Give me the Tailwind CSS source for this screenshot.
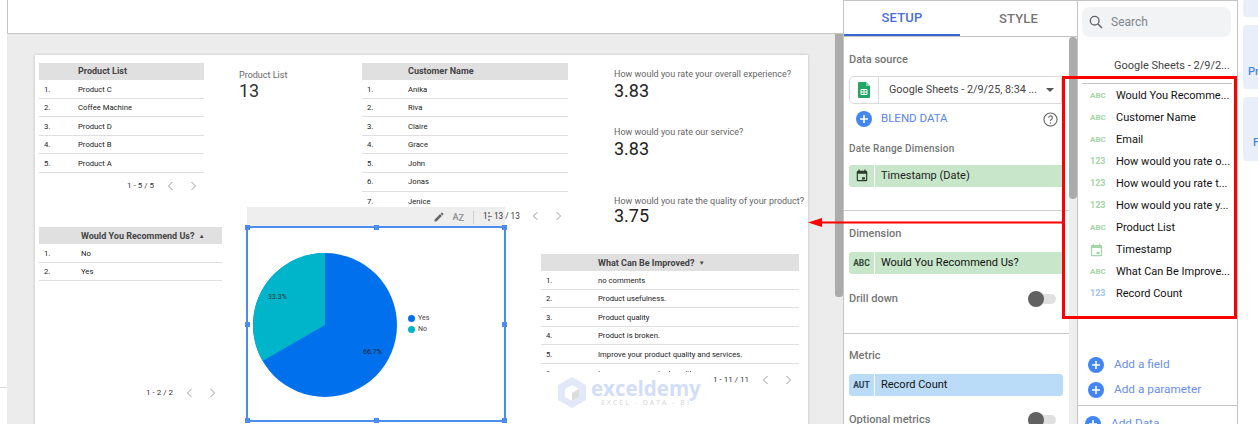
<!DOCTYPE html>
<html lang="en">
<head>
<meta charset="UTF-8">
<title>Report editor</title>
<script src="https://cdn.jsdelivr.net/npm/@tailwindcss/browser@4"></script>
</head>
<body class="bg-white overflow-hidden font-['Roboto',sans-serif]">
<div class="flex h-[424px] w-[1258px] overflow-hidden relative">

  <!-- canvas area -->
  <div class="w-[843px] shrink-0 flex flex-col">
    <div class="h-[34px] shrink-0 border-b border-l border-[#c4c4c4] ml-[7px]"></div>
    <div class="flex flex-1 min-h-0">
      <div class="w-[7px] shrink-0 relative"><div class="absolute left-0 top-[353px] w-[7px] border-t border-[#dcdcdc]"></div></div>
      <div class="flex-1 bg-[#ececec] pt-[21px] pl-[28px] min-w-0 overflow-hidden">
        <!-- report page -->
        <div class="relative w-[773px] h-[400px] bg-white shadow-[0_0_3px_rgba(0,0,0,0.2)]">

          <!-- Product List table -->
          <div class="absolute left-[4px] top-[8px] w-[165px] text-[7.7px] text-[#222]">
            <div class="h-[17px] bg-[#e0e0e0] pl-[39px] font-bold text-[#444] leading-[17px] text-[9px]">Product List</div>
            <div class="flex h-[18.6px] pt-px items-center border-b border-[#e0e0e0]"><span class="w-[39px] pl-[5px]">1.</span>Product C</div>
            <div class="flex h-[18.6px] pt-px items-center border-b border-[#e0e0e0]"><span class="w-[39px] pl-[5px]">2.</span>Coffee Machine</div>
            <div class="flex h-[18.6px] pt-px items-center border-b border-[#e0e0e0]"><span class="w-[39px] pl-[5px]">3.</span>Product D</div>
            <div class="flex h-[18.6px] pt-px items-center border-b border-[#e0e0e0]"><span class="w-[39px] pl-[5px]">4.</span>Product B</div>
            <div class="flex h-[18.6px] pt-px items-center border-b border-[#e0e0e0]"><span class="w-[39px] pl-[5px]">5.</span>Product A</div>
            <div class="flex items-center h-[24px] mt-[1px] pl-[88px] text-[8px] text-[#333]">
              <span>1 - 5 / 5</span>
              <svg class="ml-[13px]" width="7" height="10" viewBox="0 0 7 10" fill="none" stroke="#999" stroke-width="1"><path d="M5.5 1 1.5 5l4 4"/></svg>
              <svg class="ml-[16px]" width="7" height="10" viewBox="0 0 7 10" fill="none" stroke="#999" stroke-width="1"><path d="M1.5 1l4 4-4 4"/></svg>
            </div>
          </div>

          <!-- Scorecards -->
          <div class="absolute left-[204px] top-[14px] text-[#666] text-[9px] leading-[12px]">Product List</div>
          <div class="absolute left-[204px] top-[24px] text-[#333] text-[18px] leading-[24px]">13</div>
          <div class="absolute left-[579px] top-[13px] text-[#666] text-[9px] leading-[12px] whitespace-nowrap">How would you rate your overall experience?</div>
          <div class="absolute left-[579px] top-[24px] text-[#222] text-[18px] leading-[24px]">3.83</div>
          <div class="absolute left-[579px] top-[71px] text-[#666] text-[9px] leading-[12px] whitespace-nowrap">How would you rate our service?</div>
          <div class="absolute left-[579px] top-[82px] text-[#222] text-[18px] leading-[24px]">3.83</div>
          <div class="absolute left-[579px] top-[140px] text-[#666] text-[9px] leading-[12px] whitespace-nowrap">How would you rate the quality of your product?</div>
          <div class="absolute left-[579px] top-[149px] text-[#222] text-[18px] leading-[24px]">3.75</div>

          <!-- Customer Name table -->
          <div class="absolute left-[327px] top-[8px] w-[206px] h-[144px] overflow-hidden text-[7.7px] text-[#222]">
            <div class="h-[17px] bg-[#e0e0e0] pl-[46px] font-bold text-[#444] leading-[17px] text-[9px]">Customer Name</div>
            <div class="flex h-[18.6px] pt-px items-center border-b border-[#e0e0e0]"><span class="w-[46px] pl-[5px]">1.</span>Anika</div>
            <div class="flex h-[18.6px] pt-px items-center border-b border-[#e0e0e0]"><span class="w-[46px] pl-[5px]">2.</span>Riva</div>
            <div class="flex h-[18.6px] pt-px items-center border-b border-[#e0e0e0]"><span class="w-[46px] pl-[5px]">3.</span>Claire</div>
            <div class="flex h-[18.6px] pt-px items-center border-b border-[#e0e0e0]"><span class="w-[46px] pl-[5px]">4.</span>Grace</div>
            <div class="flex h-[18.6px] pt-px items-center border-b border-[#e0e0e0]"><span class="w-[46px] pl-[5px]">5.</span>John</div>
            <div class="flex h-[18.6px] pt-px items-center border-b border-[#e0e0e0]"><span class="w-[46px] pl-[5px]">6.</span>Jonas</div>
            <div class="flex h-[18.6px] pt-px items-center"><span class="w-[46px] pl-[5px]">7.</span>Jenice</div>
          </div>

          <!-- Recommend table -->
          <div class="absolute left-[4px] top-[172px] w-[183px] text-[7.7px] text-[#222]">
            <div class="h-[17px] bg-[#e0e0e0] pl-[42px] font-bold text-[#444] leading-[17px] text-[9px] whitespace-nowrap">Would You Recommend Us? <span class="text-[6px] align-[1px] ml-[2px]">▲</span></div>
            <div class="flex h-[18.6px] pt-px items-center border-b border-[#e0e0e0]"><span class="w-[42px] pl-[5px]">1.</span>No</div>
            <div class="flex h-[18.6px] pt-px items-center border-b border-[#e0e0e0]"><span class="w-[42px] pl-[5px]">2.</span>Yes</div>
          </div>
          <div class="absolute left-[111px] top-[331px] flex items-center h-[14px] text-[8px] text-[#333]">
            <span>1 - 2 / 2</span>
            <svg class="ml-[13px]" width="7" height="10" viewBox="0 0 7 10" fill="none" stroke="#999" stroke-width="1"><path d="M5.5 1 1.5 5l4 4"/></svg>
            <svg class="ml-[16px]" width="7" height="10" viewBox="0 0 7 10" fill="none" stroke="#999" stroke-width="1"><path d="M1.5 1l4 4-4 4"/></svg>
          </div>

          <!-- chart toolbar -->
          <div class="absolute left-[212px] top-[152px] w-[258px] h-[20px] bg-[#eeeeee] flex items-center justify-end text-[#555]">
            <svg class="mr-[7px]" width="12" height="12" viewBox="0 0 24 24" fill="#666"><path d="M3 17.25V21h3.75L17.81 9.94l-3.75-3.75L3 17.25zM20.71 7.04a1 1 0 0 0 0-1.41l-2.34-2.34a1 1 0 0 0-1.41 0l-1.83 1.83 3.75 3.75 1.83-1.83z"/></svg>
            <span class="text-[9px] text-[#999] font-bold mr-[9px] leading-none">A<span class="relative top-[1px]">Z</span></span>
            <div class="w-px h-[13px] bg-[#d0d0d0] mr-[8px]"></div>
            <div class="w-[23px]"></div>
          </div>
          <div class="absolute left-[448px] top-[155px] flex items-center h-[12px] text-[8.2px] text-[#333] whitespace-nowrap">
            <span>1 - 13 / 13</span>
            <svg class="ml-[12px]" width="7" height="10" viewBox="0 0 7 10" fill="none" stroke="#999" stroke-width="1"><path d="M5.5 1 1.5 5l4 4"/></svg>
            <svg class="ml-[16px]" width="7" height="10" viewBox="0 0 7 10" fill="none" stroke="#999" stroke-width="1"><path d="M1.5 1l4 4-4 4"/></svg>
          </div>
          <svg class="absolute left-[453px] top-[157px]" width="2" height="9" viewBox="0 0 2 9" fill="#777"><circle cx="1" cy="1" r="1"/><circle cx="1" cy="4.5" r="1"/><circle cx="1" cy="8" r="1"/></svg>

          <!-- Pie chart selected -->
          <div class="absolute left-[212px] top-[172px] w-[258px] h-[194px] border border-[#4a8cf0] outline outline-[0.5px] outline-[#4a8cf0]">
            <svg class="absolute left-[4px] top-[24px]" width="146" height="146" viewBox="0 0 146 146">
              <circle cx="73" cy="73" r="72" fill="#0070ec"/>
              <path d="M73 73 L73 1 A72 72 0 0 0 10.6 109 Z" fill="#00b5c9"/>
            </svg>
            <span class="absolute left-[20px] top-[65px] text-[7px] text-[#333] leading-[8px]">33.3%</span>
            <span class="absolute left-[115px] top-[120px] text-[7px] text-[#222] leading-[8px]">66.7%</span>
            <div class="absolute left-[160px] top-[85px] flex items-center gap-[3px] text-[7px] text-[#444] leading-[11px]"><span class="w-[7px] h-[7px] rounded-full bg-[#0070ec]"></span>Yes</div>
            <div class="absolute left-[160px] top-[96px] flex items-center gap-[3px] text-[7px] text-[#444] leading-[11px]"><span class="w-[7px] h-[7px] rounded-full bg-[#00b5c9]"></span>No</div>
            <!-- handles -->
            <span class="absolute -left-[3px] -top-[3px] w-[5px] h-[5px] bg-[#4a8cf0]"></span>
            <span class="absolute left-[126px] -top-[3px] w-[5px] h-[5px] bg-[#4a8cf0]"></span>
            <span class="absolute -right-[3px] -top-[3px] w-[5px] h-[5px] bg-[#4a8cf0]"></span>
            <span class="absolute -left-[3px] top-[94px] w-[5px] h-[5px] bg-[#4a8cf0]"></span>
            <span class="absolute -right-[3px] top-[94px] w-[5px] h-[5px] bg-[#4a8cf0]"></span>
            <span class="absolute -left-[3px] -bottom-[3px] w-[5px] h-[5px] bg-[#4a8cf0]"></span>
            <span class="absolute left-[126px] -bottom-[3px] w-[5px] h-[5px] bg-[#4a8cf0]"></span>
            <span class="absolute -right-[3px] -bottom-[3px] w-[5px] h-[5px] bg-[#4a8cf0]"></span>
          </div>

          <!-- Improve table -->
          <div class="absolute left-[506px] top-[199px] w-[258px] h-[118px] overflow-hidden text-[7.7px] text-[#222]">
            <div class="h-[17px] bg-[#e0e0e0] pl-[57px] font-bold text-[#444] leading-[17px] text-[9px] whitespace-nowrap">What Can Be Improved? <span class="text-[6px] align-[1px] ml-[2px]">▼</span></div>
            <div class="flex h-[18.6px] pt-px items-center border-b border-[#e0e0e0]"><span class="w-[57px] pl-[5px]">1.</span>no comments</div>
            <div class="flex h-[18.6px] pt-px items-center border-b border-[#e0e0e0]"><span class="w-[57px] pl-[5px]">2.</span>Product usefulness.</div>
            <div class="flex h-[18.6px] pt-px items-center border-b border-[#e0e0e0]"><span class="w-[57px] pl-[5px]">3.</span>Product quality</div>
            <div class="flex h-[18.6px] pt-px items-center border-b border-[#e0e0e0]"><span class="w-[57px] pl-[5px]">4.</span>Product is broken.</div>
            <div class="flex h-[18.6px] pt-px items-center border-b border-[#e0e0e0]"><span class="w-[57px] pl-[5px]">5.</span>Improve your product quality and services.</div>
            <div class="flex h-[18.6px] pt-px items-center"><span class="w-[57px] pl-[5px]">6.</span>Improve your product quality.</div>
          </div>
          <div class="absolute left-[678px] top-[318px] flex items-center h-[14px] text-[8px] text-[#333]">
            <span>1 - 11 / 11</span>
            <svg class="ml-[13px]" width="7" height="10" viewBox="0 0 7 10" fill="none" stroke="#999" stroke-width="1"><path d="M5.5 1 1.5 5l4 4"/></svg>
            <svg class="ml-[16px]" width="7" height="10" viewBox="0 0 7 10" fill="none" stroke="#999" stroke-width="1"><path d="M1.5 1l4 4-4 4"/></svg>
          </div>

          <!-- Watermark -->
          <div class="absolute left-[523px] top-[322px] flex items-center gap-[5px] opacity-25">
            <svg width="28" height="31" viewBox="0 0 28 31"><path d="M14 0 28 8v15L14 31 0 23V8z" fill="#8aa9e8"/><path d="M14 8l7 4v8l-7 4-7-4v-8z" fill="#fff"/><path d="M14 16l7-4v8l-7 4z" fill="#777"/></svg>
            <div class="flex flex-col items-center">
              <span class="font-['Open_Sans',sans-serif] font-bold text-[20.5px] leading-[20px] text-[#4a7de8]">exceldemy</span>
              <span class="font-['Open_Sans',sans-serif] text-[7px] tracking-[2px] leading-[10px] text-[#555]">EXCEL - DATA - BI</span>
            </div>
          </div>
        </div>
      </div>
      <div class="w-[8px] shrink-0 bg-[#ececec] relative"><div class="absolute left-0 top-0 w-[8px] h-[263px] bg-[#ababab] rounded-b-[3px]"></div></div>
    </div>
  </div>

  <!-- Setup panel -->
  <div class="w-[235px] shrink-0 border-l border-r border-[#c4c4c4] border-t flex flex-col overflow-hidden">
    <div class="h-[36px] shrink-0 flex border-b border-[#c4c4c4]">
      <div class="w-[116px] border-b-2 border-[#3367d6] text-[#4a6fd8] text-[13px] font-medium flex items-center justify-center tracking-[0.2px]">SETUP</div>
      <div class="w-[117px] text-[#757575] text-[13px] font-medium flex items-center justify-center tracking-[0.2px]">STYLE</div>
    </div>
    <div class="flex flex-1 min-h-0">
      <div class="w-[225px] shrink-0 flex flex-col">
        <div class="pl-[5px] h-[174px] shrink-0 border-b border-[#d0d0d0]">
          <div class="text-[11px] font-medium text-[#757575] pt-[16px] leading-[14px]">Data source</div>
          <div class="mt-[9px] w-[213px] h-[28px] border border-[#dadada] rounded-l-[5px] flex items-center">
            <div class="w-[29px] h-full border-r border-[#dadada] flex items-center justify-center">
              <svg width="12" height="16" viewBox="0 0 12 16"><path d="M1 0h7l4 4v11a1 1 0 0 1-1 1H1a1 1 0 0 1-1-1V1a1 1 0 0 1 1-1z" fill="#23a566"/><path d="M8 0l4 4H8z" fill="#8ed1b1"/><path d="M3 7.5h6v5H3z" fill="none" stroke="#fff" stroke-width="1"/><path d="M6 7.5v5M3 10h6" stroke="#fff" stroke-width="1"/></svg>
            </div>
            <span class="ml-[10px] text-[10.8px] text-[#444] whitespace-nowrap">Google Sheets - 2/9/25, 8:34 ...</span>
            <span class="ml-auto mr-[7px] w-0 h-0 border-x-[4px] border-x-transparent border-t-[4px] border-t-[#555]"></span>
          </div>
          <div class="flex items-center mt-[6px] h-[18px] w-[213px]">
            <svg class="ml-[7px]" width="16" height="16" viewBox="0 0 16 16"><circle cx="8" cy="8" r="8" fill="#4285f4"/><path d="M8 4v8M4 8h8" stroke="#fff" stroke-width="1.6"/></svg>
            <span class="ml-[9px] text-[11.5px] text-[#5b85ee]">BLEND DATA</span>
            <svg class="ml-auto mr-[4px]" width="15" height="15" viewBox="0 0 24 24" fill="none" stroke="#666" stroke-width="1.8"><circle cx="12" cy="12" r="10.5"/><path d="M9 9.2a3 3 0 1 1 4.6 2.5c-1 .7-1.6 1.3-1.6 2.6"/><path d="M12 16.5v2"/></svg>
          </div>
          <div class="text-[10px] font-medium text-[#757575] mt-[15px] leading-[12px] tracking-[0.2px]">Date Range Dimension</div>
          <div class="mt-[10px] w-[213px] h-[22px] flex">
            <div class="w-[25px] bg-[#c8e6c9] rounded-l-[3px] flex items-center justify-center mr-px">
              <svg width="14" height="14" viewBox="0 0 24 24" fill="#2b3a2e"><path d="M19 3h-1V1h-2v2H8V1H6v2H5a2 2 0 0 0-2 2v14a2 2 0 0 0 2 2h14a2 2 0 0 0 2-2V5a2 2 0 0 0-2-2zm0 16H5V8h14v11zm-2-5h-5v4h5v-4z"/></svg>
            </div>
            <div class="flex-1 bg-[#c8e6c9] text-[11px] text-[#222] flex items-center pl-[6px]">Timestamp (Date)</div>
          </div>
        </div>
        <div class="pl-[5px] h-[123px] shrink-0 border-b border-[#c8c8c8]">
          <div class="text-[11px] font-medium text-[#757575] pt-[16px] leading-[14px]">Dimension</div>
          <div class="mt-[11px] w-[213px] h-[22px] flex">
            <div class="w-[25px] bg-[#c8e6c9] rounded-l-[3px] flex items-center justify-center mr-px text-[8.5px] font-bold text-[#2f4a38]">ABC</div>
            <div class="flex-1 bg-[#c8e6c9] text-[11px] text-[#111] flex items-center pl-[6px]">Would You Recommend Us?</div>
          </div>
          <div class="flex items-center justify-between mt-[17px] h-[16px] w-[207px]">
            <span class="text-[11px] font-medium text-[#757575]">Drill down</span>
            <div class="relative w-[27px] h-[10px] bg-[#e0e0e0] rounded-full"><span class="absolute -left-px -top-[3px] w-[16px] h-[16px] rounded-full bg-[#616161]"></span></div>
          </div>
        </div>
        <div class="pl-[5px]">
          <div class="text-[11px] font-medium text-[#757575] pt-[15px] leading-[14px]">Metric</div>
          <div class="mt-[11px] w-[214px] h-[22px] flex">
            <div class="w-[25px] bg-[#bbdcf8] rounded-l-[3px] flex items-center justify-center mr-px text-[8.5px] font-bold text-[#2a4052]">AUT</div>
            <div class="flex-1 bg-[#bbdcf8] rounded-r-[3px] text-[11px] text-[#111] flex items-center pl-[6px]">Record Count</div>
          </div>
          <div class="flex items-center justify-between mt-[16px] h-[16px] w-[207px]">
            <span class="text-[11px] font-medium text-[#757575] whitespace-nowrap">Optional metrics</span>
            <div class="relative w-[27px] h-[10px] bg-[#e0e0e0] rounded-full"><span class="absolute -left-px -top-[3px] w-[16px] h-[16px] rounded-full bg-[#616161]"></span></div>
          </div>
        </div>
      </div>
      <div class="w-[8px] shrink-0 bg-[#eeeeee] relative"><div class="absolute left-0 top-0 w-[8px] h-[162px] bg-[#ababab] rounded-[4px]"></div></div>
    </div>
  </div>

  <!-- Data panel -->
  <div class="w-[160px] shrink-0 border-r border-[#c4c4c4] border-t flex flex-col overflow-hidden">
    <div class="ml-[4px] mt-[6px] h-[30px] w-[149px] shrink-0 rounded-[8px] bg-[#f1f3f4] flex items-center pl-[6px]">
      <svg width="16" height="16" viewBox="0 0 24 24" fill="none" stroke="#5f6368" stroke-width="2"><circle cx="10" cy="10" r="6.5"/><path d="M15 15l6 6"/></svg>
      <span class="ml-[7px] text-[12px] text-[#80868b]">Search</span>
    </div>
    <div class="mt-[21px] pl-[36px] text-[11px] text-[#444] leading-[16px] whitespace-nowrap shrink-0">Google Sheets - 2/9/2...</div>
    <div class="mt-[9px] ml-[4px] border-t border-[#c4c4c4] w-[150px] shrink-0"></div>
    <div class="mt-[1px] flex flex-col shrink-0 text-[11px] text-[#111] whitespace-nowrap">
      <div class="flex items-center h-[22px]"><span class="w-[38px] pl-[12px] text-[8px] font-bold text-[#a5d6a7]">ABC</span>Would You Recomme...</div>
      <div class="flex items-center h-[22px]"><span class="w-[38px] pl-[12px] text-[8px] font-bold text-[#a5d6a7]">ABC</span>Customer Name</div>
      <div class="flex items-center h-[22px]"><span class="w-[38px] pl-[12px] text-[8px] font-bold text-[#a5d6a7]">ABC</span>Email</div>
      <div class="flex items-center h-[22px]"><span class="w-[38px] pl-[12px] text-[9px] font-bold text-[#a5d6a7]">123</span>How would you rate o...</div>
      <div class="flex items-center h-[22px]"><span class="w-[38px] pl-[12px] text-[9px] font-bold text-[#a5d6a7]">123</span>How would you rate t...</div>
      <div class="flex items-center h-[22px]"><span class="w-[38px] pl-[12px] text-[9px] font-bold text-[#a5d6a7]">123</span>How would you rate y...</div>
      <div class="flex items-center h-[22px]"><span class="w-[38px] pl-[12px] text-[8px] font-bold text-[#a5d6a7]">ABC</span>Product List</div>
      <div class="flex items-center h-[22px]"><span class="w-[38px] pl-[11px]"><svg width="15" height="15" viewBox="0 0 24 24" fill="#a5d6a7"><path d="M19 3h-1V1h-2v2H8V1H6v2H5a2 2 0 0 0-2 2v14a2 2 0 0 0 2 2h14a2 2 0 0 0 2-2V5a2 2 0 0 0-2-2zm0 16H5V8h14v11zm-2-5h-5v4h5v-4z"/></svg></span>Timestamp</div>
      <div class="flex items-center h-[22px]"><span class="w-[38px] pl-[12px] text-[8px] font-bold text-[#a5d6a7]">ABC</span>What Can Be Improve...</div>
      <div class="flex items-center h-[22px]"><span class="w-[38px] pl-[12px] text-[9px] font-bold text-[#a0c4f0]">123</span>Record Count</div>
    </div>
    <div class="mt-[52px] flex items-center h-[16px] shrink-0 pl-[10px]">
      <svg width="16" height="16" viewBox="0 0 16 16"><circle cx="8" cy="8" r="8" fill="#4285f4"/><path d="M8 4v8M4 8h8" stroke="#fff" stroke-width="1.6"/></svg>
      <span class="ml-[10px] text-[11.8px] text-[#6a8ff0]">Add a field</span>
    </div>
    <div class="mt-[9px] flex items-center h-[16px] shrink-0 pl-[10px]">
      <svg width="16" height="16" viewBox="0 0 16 16"><circle cx="8" cy="8" r="8" fill="#4285f4"/><path d="M8 4v8M4 8h8" stroke="#fff" stroke-width="1.6"/></svg>
      <span class="ml-[10px] text-[11.8px] text-[#6a8ff0]">Add a parameter</span>
    </div>
    <div class="mt-[7px] border-t border-[#c4c4c4] pt-[10px] shrink-0 pl-[7px]">
      <div class="flex items-center h-[16px]">
        <svg width="16" height="16" viewBox="0 0 16 16"><circle cx="8" cy="8" r="8" fill="#4285f4"/><path d="M8 4v8M4 8h8" stroke="#fff" stroke-width="1.6"/></svg>
        <span class="ml-[10px] text-[11.8px] text-[#6a8ff0]">Add Data</span>
      </div>
    </div>
  </div>

  <!-- Far right tiles -->
  <div class="flex-1 pl-[5px] flex flex-col gap-[8px] -mt-[1px] text-[11px] font-medium text-[#4285f4]">
    <div class="h-[18px] bg-[#e8effa] rounded-l-[4px]"></div>
    <div class="h-[64px] bg-[#e8effa] rounded-l-[4px] pl-[5px] pt-[40px] leading-[14px]">Pr</div>
    <div class="h-[64px] bg-[#e8effa] rounded-l-[4px] pl-[10px] pt-[39px] leading-[14px]">F</div>
  </div>

  <!-- Annotation: red highlight and arrow -->
  <div class="absolute left-[1062px] top-[76px] w-[175px] h-[243px] border-[3px] border-[#ff0000]"></div>
  <svg class="absolute left-[806px] top-[215px]" width="258" height="16" viewBox="0 0 258 16">
    <path d="M258 7.5H14" fill="none" stroke="#ff0000" stroke-width="2"/>
    <path d="M2 7.5 16 3v9z" fill="#ff0000"/>
  </svg>
</div>
</body>
</html>
